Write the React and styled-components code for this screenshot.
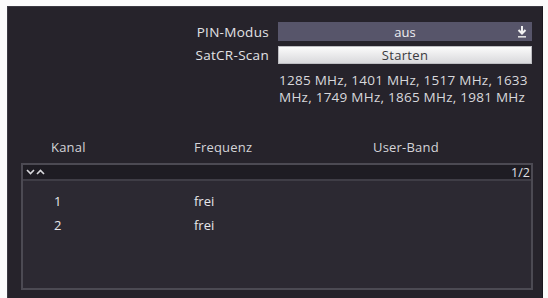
import styled, { createGlobalStyle } from 'styled-components';

const GlobalStyle = createGlobalStyle`
  html, body {
    margin: 0;
    padding: 0;
    background: #fbfbfb;
  }
  body {
    font-family: 'Open Sans', 'DejaVu Sans', sans-serif;
  }
`;

const settings = [
  { label: 'PIN-Modus', value: 'aus', kind: 'select' },
  { label: 'SatCR-Scan', value: 'Starten', kind: 'button' },
];

const channels = [
  { nr: 1, freq: 'frei', band: '' },
  { nr: 2, freq: 'frei', band: '' },
];

const DownIcon = () => (
  <svg width="10" height="13" viewBox="0 0 10 13">
    <path d="M5 1 V8 M1.5 5 L5 8.5 L8.5 5" stroke="#f2f2f2" strokeWidth="2" fill="none" />
    <rect x="1" y="11" width="8" height="1.6" fill="#e0e0e0" />
  </svg>
);

const Chevrons = () => (
  <svg width="20" height="8" viewBox="0 0 20 8">
    <path d="M1 2 L4.5 5.5 L8 2" stroke="#d8d8dc" strokeWidth="1.6" fill="none" />
    <path d="M11 6 L14.5 2.5 L18 6" stroke="#d8d8dc" strokeWidth="1.6" fill="none" />
  </svg>
);

const App = () => {
  return (
    <>
      <GlobalStyle />
      <Panel>
        <SettingsGrid>
          {settings.map((item) => (
            <SettingRow key={item.label}>
              <Label>{item.label}</Label>
              {item.kind === 'select' ? (
                <SelectField>
                  <span>{item.value}</span>
                  <SelectIcon>
                    <DownIcon />
                  </SelectIcon>
                </SelectField>
              ) : (
                <ActionButton>{item.value}</ActionButton>
              )}
            </SettingRow>
          ))}
          <InfoText>
            1285 MHz, 1401 MHz, 1517 MHz, 1633
            <br />
            MHz, 1749 MHz, 1865 MHz, 1981 MHz
          </InfoText>
        </SettingsGrid>

        <ColumnHeads>
          <HeadCell $width={143}>Kanal</HeadCell>
          <HeadCell $width={179}>Frequenz</HeadCell>
          <HeadCell>User-Band</HeadCell>
        </ColumnHeads>

        <ListBox>
          <ListBar>
            <Chevrons />
            <PageCount>1/2</PageCount>
          </ListBar>
          <ListBody>
            {channels.map((ch) => (
              <ListRow key={ch.nr}>
                <RowCell $width={140}>{ch.nr}</RowCell>
                <RowCell $width={179}>{ch.freq}</RowCell>
                <RowCell>{ch.band}</RowCell>
              </ListRow>
            ))}
          </ListBody>
        </ListBox>
      </Panel>
    </>
  );
};

export default App;

const Panel = styled.div`
  box-sizing: border-box;
  margin: 6px 0 0 7px;
  width: 536px;
  height: 292px;
  background: #26232b;
  border-left: 1px solid #3b3942;
  border-top: 1px solid #3b3942;
  border-right: 1px solid #1a181e;
  padding: 15px 0 0 0;
  color: #e4e4e8;
  display: flex;
  flex-direction: column;
`;

const SettingsGrid = styled.div`
  display: flex;
  flex-direction: column;
  gap: 5px;
`;

const SettingRow = styled.div`
  display: grid;
  grid-template-columns: 261px 254px;
  column-gap: 9px;
  align-items: center;
`;

const Label = styled.div`
  text-align: right;
  font-size: 13.5px;
  letter-spacing: 0.3px;
  color: #e2e2e6;
  line-height: 18px;
`;

const SelectField = styled.div`
  position: relative;
  height: 19px;
  background: #57556a;
  display: flex;
  align-items: center;
  justify-content: center;
  font-size: 13px;
  color: #eeeef2;
`;

const SelectIcon = styled.span`
  position: absolute;
  right: 5px;
  top: 3px;
  display: flex;
`;

const ActionButton = styled.div`
  height: 18px;
  background: linear-gradient(#fbfbfb, #d9d9dc);
  border: 1px solid #bdbdc2;
  box-sizing: border-box;
  display: flex;
  align-items: center;
  justify-content: center;
  font-size: 13px;
  letter-spacing: 0.3px;
  color: #3a3a40;
`;

const InfoText = styled.div`
  margin: 0 0 0 271px;
  padding-top: 3px;
  font-size: 13.5px;
  letter-spacing: 0.25px;
  line-height: 17px;
  color: #d8d8dc;
  white-space: nowrap;
`;

const ColumnHeads = styled.div`
  display: flex;
  margin: 32px 0 0 43px;
  font-size: 13px;
  letter-spacing: 0.2px;
  color: #d4d4d8;
  line-height: 18px;
`;

const HeadCell = styled.div`
  width: ${(props) => (props.$width ? `${props.$width}px` : 'auto')};
`;

const ListBox = styled.div`
  box-sizing: border-box;
  margin: 7px 0 0 13px;
  width: 512px;
  height: 127px;
  border: 2px solid #4c4a53;
  background: #2c2932;
  display: flex;
  flex-direction: column;
`;

const ListBar = styled.div`
  height: 14px;
  background: #1e1c23;
  border-bottom: 2px solid #3f3d46;
  display: flex;
  align-items: center;
  justify-content: space-between;
  padding: 0 1px 0 3px;
`;

const PageCount = styled.span`
  font-size: 12.5px;
  color: #e0e0e4;
`;

const ListBody = styled.div`
  padding: 8px 0 0 31px;
  display: flex;
  flex-direction: column;
`;

const ListRow = styled.div`
  display: flex;
  height: 24px;
  align-items: center;
  font-size: 13px;
  color: #e6e6ea;
`;

const RowCell = styled.div`
  width: ${(props) => (props.$width ? `${props.$width}px` : 'auto')};
`;
